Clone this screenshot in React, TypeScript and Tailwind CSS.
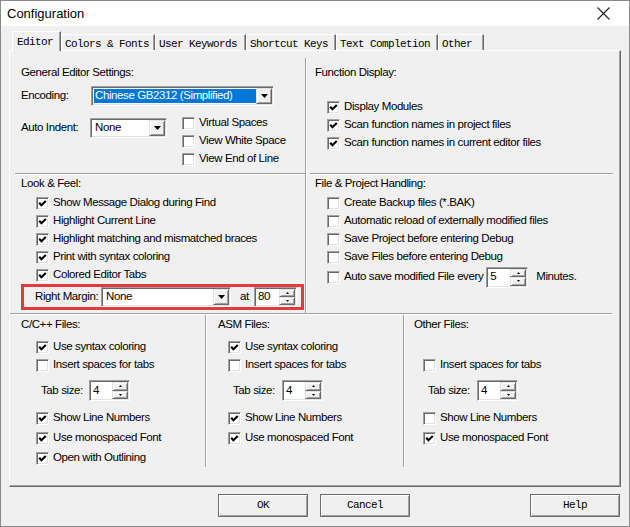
import React from "react";

const sunken =
  "border border-t-[#a0a0a0] border-l-[#a0a0a0] border-r-white border-b-white shadow-[inset_1px_1px_0_#696969,inset_-1px_-1px_0_#e3e3e3]";
const raised =
  "border border-t-[#e3e3e3] border-l-[#e3e3e3] border-r-[#696969] border-b-[#696969] shadow-[inset_1px_1px_0_#ffffff,inset_-1px_-1px_0_#a0a0a0] bg-[#f0f0f0]";
const mono = "font-['Liberation_Mono','Courier_New',monospace] text-[11px] tracking-[-0.6px]";

function Box({ checked }: { checked?: boolean }) {
  return (
    <span className={`${sunken} bg-white w-[13px] h-[13px] shrink-0 flex items-center justify-center`}>
      {checked && (
        <svg width="9" height="9" viewBox="0 0 9 9">
          <path d="M1.2 3.8 L3.4 6.2 L7.8 1.9" fill="none" stroke="#000" strokeWidth="2.1" />
        </svg>
      )}
    </span>
  );
}

function Check({ label, checked, h = "h-[18px]" }: { label: string; checked?: boolean; h?: string }) {
  return (
    <div className={`flex items-center ${h}`}>
      <Box checked={checked} />
      <span className="ml-[4px] whitespace-nowrap">{label}</span>
    </div>
  );
}

function Arrow() {
  return (
    <svg width="7" height="4" viewBox="0 0 7 4">
      <path d="M0 0h7L3.5 4z" fill="#000" />
    </svg>
  );
}

function Combo({ w, value, selected }: { w: string; value: string; selected?: boolean }) {
  return (
    <div className={`${sunken} bg-white h-[20px] ${w} flex p-[1px] shrink-0`}>
      <div className="flex-1 flex items-center min-w-0 pl-[1px] py-[1px]">
        {selected ? (
          <span className="bg-[#0078d7] text-white w-full h-full flex items-center pl-[1px] whitespace-nowrap">
            {value}
          </span>
        ) : (
          <span className="pl-[2px]">{value}</span>
        )}
      </div>
      <div className={`${raised} w-[16px] flex items-center justify-center`}>
        <Arrow />
      </div>
    </div>
  );
}

function Spin({ w, h, value }: { w: string; h: string; value: string }) {
  return (
    <div className={`${sunken} bg-white ${w} ${h} flex p-[1px] shrink-0`}>
      <div className="flex-1 flex items-center pl-[2px]">{value}</div>
      <div className="w-[16px] flex flex-col">
        <div className={`${raised} flex-1 flex items-center justify-center`}>
          <svg width="3" height="2" viewBox="0 0 3 2">
            <path d="M1.5 0L3 2H0z" fill="#000" />
          </svg>
        </div>
        <div className={`${raised} flex-1 flex items-center justify-center`}>
          <svg width="3" height="2" viewBox="0 0 3 2">
            <path d="M0 0h3L1.5 2z" fill="#000" />
          </svg>
        </div>
      </div>
    </div>
  );
}

function HLine({ className = "" }: { className?: string }) {
  return <div className={`h-[2px] border-t border-t-[#a0a0a0] border-b border-b-white ${className}`} />;
}

function VLine({ className = "" }: { className?: string }) {
  return <div className={`w-[2px] shrink-0 border-l border-l-[#a0a0a0] border-r border-r-white ${className}`} />;
}

function Tab({ label, w, active }: { label: string; w: string; active?: boolean }) {
  if (active) {
    return (
      <div
        className={`${w} h-[20px] -mb-[1px] bg-[#f0f0f0] border-t border-l border-r border-t-white border-l-white border-r-[#696969] shadow-[inset_-1px_0_0_#a0a0a0] pl-[4px] pt-[2px] whitespace-pre`}
      >
        {label}
      </div>
    );
  }
  return (
    <div
      className={`${w} h-[16px] border-t border-l border-r border-t-white border-l-white border-r-[#696969] shadow-[inset_-1px_0_0_#a0a0a0] pl-[3px] pt-[1px] whitespace-pre`}
    >
      {label}
    </div>
  );
}

function Button({ label, className = "" }: { label: string; className?: string }) {
  return (
    <div
      className={`w-[90px] h-[23px] border border-[#6d6d6d] bg-[#f0f0f0] shadow-[inset_1px_1px_0_#ffffff,inset_-1px_-1px_0_#a0a0a0] flex items-center justify-center ${mono} ${className}`}
    >
      {label}
    </div>
  );
}

export default function App() {
  return (
    <div className="w-[630px] h-[527px] bg-[#f0f0f0] border border-[#8a8a8a] flex flex-col font-['Liberation_Sans',Arial,sans-serif] text-[11.5px] tracking-[-0.4px] text-black overflow-hidden">
      {/* title bar */}
      <div className="h-[25px] bg-white flex items-center justify-between pl-[6px] pr-[19px] text-[13px] tracking-normal">
        <span>Configuration</span>
        <svg width="13" height="13" viewBox="0 0 13 13">
          <path d="M0.5 0.5L12.5 12.5M12.5 0.5L0.5 12.5" stroke="#222" strokeWidth="1.1" />
        </svg>
      </div>

      {/* tabs */}
      <div className={`h-[24px] flex items-end pl-[11px] relative z-10 ${mono}`}>
        <Tab label="Editor" w="w-[49px]" active />
        <Tab label="Colors & Fonts" w="w-[94px]" />
        <Tab label="User Keywords" w="w-[91px]" />
        <Tab label="Shortcut Keys" w="w-[90px]" />
        <Tab label="Text Completion" w="w-[102px]" />
        <Tab label="Other" w="w-[46px]" />
      </div>

      {/* tab page */}
      <div className="ml-[8px] w-[612px] h-[437px] border border-t-white border-l-white border-r-[#696969] border-b-[#696969] shadow-[inset_-1px_-1px_0_#a0a0a0] flex flex-col">
        <div className="flex h-[262px]">
          {/* left column */}
          <div className="w-[295px] flex flex-col">
            <div className="h-[122px] pl-[11px] pt-[14px]">
              <div className="h-[16px] flex items-center">General Editor Settings:</div>
              <div className="flex items-center mt-[5px]">
                <span className="w-[70px]">Encoding:</span>
                <Combo w="w-[183px]" value="Chinese GB2312 (Simplified)" selected />
              </div>
              <div className="flex items-start mt-[8px]">
                <div className="flex items-center mt-[4px]">
                  <span className="w-[69px]">Auto Indent:</span>
                  <Combo w="w-[77px]" value="None" />
                </div>
                <div className="ml-[15px] flex flex-col">
                  <Check label="Virtual Spaces" />
                  <Check label="View White Space" />
                  <Check label="View End of Line" />
                </div>
              </div>
            </div>
            <HLine className="ml-[5px]" />
            <div className="h-[138px] pl-[11px] pt-[1px]">
              <div className="h-[16px] flex items-center">Look &amp; Feel:</div>
              <div className="mt-[2px] ml-[15px] flex flex-col">
                <Check label="Show Message Dialog during Find" checked />
                <Check label="Highlight Current Line" checked />
                <Check label="Highlight matching and mismatched braces" checked />
                <Check label="Print with syntax coloring" checked />
                <Check label="Colored Editor Tabs" checked />
              </div>
              <div className="w-[283px] h-[26px] border-[3px] border-[#e53a3d] flex items-center pl-[11px]">
                <span className="w-[66px] whitespace-nowrap">Right Margin:</span>
                <Combo w="w-[130px]" value="None" />
                <span className="ml-[9px] w-[14px]">at</span>
                <Spin w="w-[43px]" h="h-[20px]" value="80" />
              </div>
            </div>
          </div>

          <VLine className="mt-[7px]" />

          {/* right column */}
          <div className="flex-1 flex flex-col">
            <div className="h-[122px] pl-[8px] pt-[14px]">
              <div className="h-[16px] flex items-center">Function Display:</div>
              <div className="mt-[17px] ml-[12px] flex flex-col">
                <Check label="Display Modules" checked />
                <Check label="Scan function names in project files" checked />
                <Check label="Scan function names in current editor files" checked />
              </div>
            </div>
            <HLine className="ml-[3px] mr-[7px]" />
            <div className="pl-[8px] pt-[1px]">
              <div className="h-[16px] flex items-center">File &amp; Project Handling:</div>
              <div className="mt-[2px] ml-[12px] flex flex-col">
                <Check label="Create Backup files (*.BAK)" />
                <Check label="Automatic reload of externally modified files" />
                <Check label="Save Project before entering Debug" />
                <Check label="Save Files before entering Debug" />
                <div className="flex items-center h-[22px]">
                  <Box />
                  <span className="ml-[4px] whitespace-nowrap">Auto save modified File every</span>
                  <div className="ml-[3px]">
                    <Spin w="w-[42px]" h="h-[21px]" value="5" />
                  </div>
                  <span className="ml-[8px]">Minutes.</span>
                </div>
              </div>
            </div>
          </div>
        </div>

        <HLine className="mr-[8px]" />

        {/* file type columns */}
        <div className="flex flex-1">
          <div className="w-[195px] pl-[11px] pt-[2px]">
            <div className="h-[16px] flex items-center">C/C++ Files:</div>
            <div className="mt-[5px] ml-[15px]">
              <Check label="Use syntax coloring" checked />
              <Check label="Insert spaces for tabs" />
            </div>
            <div className="mt-[6px] ml-[20px] flex items-center">
              <span className="w-[48px]">Tab size:</span>
              <Spin w="w-[41px]" h="h-[21px]" value="4" />
            </div>
            <div className="mt-[7px] ml-[15px]">
              <Check label="Show Line Numbers" checked h="h-[20px]" />
              <Check label="Use monospaced Font" checked h="h-[20px]" />
              <Check label="Open with Outlining" checked h="h-[20px]" />
            </div>
          </div>
          <VLine className="h-[152px]" />
          <div className="w-[196px] pl-[11px] pt-[2px]">
            <div className="h-[16px] flex items-center">ASM Files:</div>
            <div className="mt-[5px] ml-[10px]">
              <Check label="Use syntax coloring" checked />
              <Check label="Insert spaces for tabs" />
            </div>
            <div className="mt-[6px] ml-[15px] flex items-center">
              <span className="w-[49px]">Tab size:</span>
              <Spin w="w-[41px]" h="h-[21px]" value="4" />
            </div>
            <div className="mt-[7px] ml-[10px]">
              <Check label="Show Line Numbers" checked h="h-[20px]" />
              <Check label="Use monospaced Font" checked h="h-[20px]" />
            </div>
          </div>
          <VLine className="h-[152px]" />
          <div className="flex-1 pl-[9px] pt-[2px]">
            <div className="h-[16px] flex items-center">Other Files:</div>
            <div className="mt-[5px] ml-[9px]">
              <div className="h-[18px]" />
              <Check label="Insert spaces for tabs" />
            </div>
            <div className="mt-[6px] ml-[14px] flex items-center">
              <span className="w-[49px]">Tab size:</span>
              <Spin w="w-[41px]" h="h-[21px]" value="4" />
            </div>
            <div className="mt-[7px] ml-[9px]">
              <Check label="Show Line Numbers" h="h-[20px]" />
              <Check label="Use monospaced Font" checked h="h-[20px]" />
            </div>
          </div>
        </div>
      </div>

      {/* buttons */}
      <div className="mt-[7px] flex">
        <Button label="OK" className="ml-[217px]" />
        <Button label="Cancel" className="ml-[12px]" />
        <Button label="Help" className="ml-[120px]" />
      </div>
    </div>
  );
}
